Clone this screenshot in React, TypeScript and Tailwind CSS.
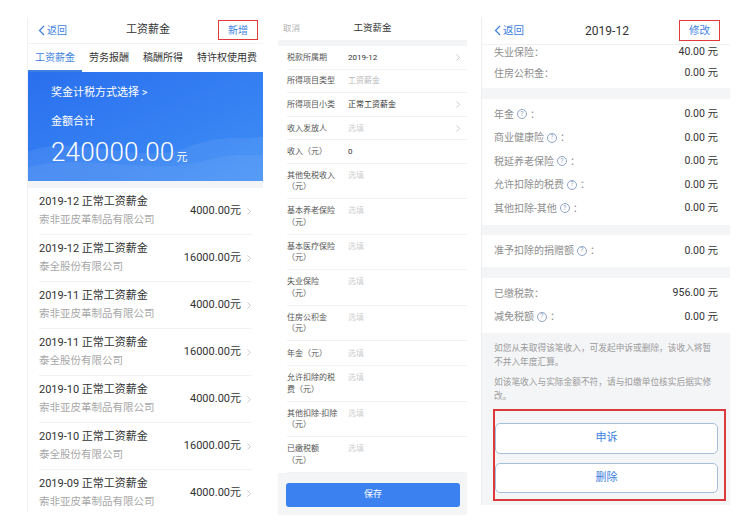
import React from 'react';

const BLUE = 'text-[#3d7fe0]';

function BackLink({ size = 'text-[10px]' }: { size?: string }) {
  return (
    <span className={`flex items-center gap-[2px] ${BLUE} ${size}`}>
      <svg width="7" height="11" viewBox="0 0 7 11" fill="none">
        <polyline points="6,1 1.5,5.5 6,10" stroke="#3d7fe0" strokeWidth="1.2" />
      </svg>
      返回
    </span>
  );
}

function Chevron({ className = '' }: { className?: string }) {
  return (
    <svg width="4" height="7" viewBox="0 0 4 7" fill="none" className={className}>
      <polyline points="0.5,0.5 3.5,3.5 0.5,6.5" stroke="#c4c4c4" strokeWidth="0.9" />
    </svg>
  );
}

function Help() {
  return (
    <span className="inline-flex items-center justify-center w-[10px] h-[10px] rounded-full border border-[#8fa4c6] text-[7px] leading-none text-[#8fa4c6] mx-[3px]">
      ?
    </span>
  );
}

const salaryRows = [
  { title: '2019-12 正常工资薪金', company: '索非亚皮革制品有限公司', amount: '4000.00' },
  { title: '2019-12 正常工资薪金', company: '泰全股份有限公司', amount: '16000.00' },
  { title: '2019-11 正常工资薪金', company: '索非亚皮革制品有限公司', amount: '4000.00' },
  { title: '2019-11 正常工资薪金', company: '泰全股份有限公司', amount: '16000.00' },
  { title: '2019-10 正常工资薪金', company: '索非亚皮革制品有限公司', amount: '4000.00' },
  { title: '2019-10 正常工资薪金', company: '泰全股份有限公司', amount: '16000.00' },
  { title: '2019-09 正常工资薪金', company: '索非亚皮革制品有限公司', amount: '4000.00' },
];

function SalaryList() {
  const tabs = ['工资薪金', '劳务报酬', '稿酬所得', '特许权使用费'];
  return (
    <div className="w-[236px] h-[495px] shrink-0 overflow-hidden flex flex-col bg-white border-l border-[#f0f0f0]">
      <div className="h-[27px] shrink-0 grid grid-cols-[1fr_auto_1fr] items-center pl-[10px] pr-[5px] border-b border-[#f3f3f3]">
        <BackLink />
        <span className="text-[11px] text-[#333]">工资薪金</span>
        <div className="flex justify-end">
          <span className={`w-[40px] h-[20px] flex items-center justify-center border-[1.5px] border-[#e0393b] text-[10px] ${BLUE}`}>
            新增
          </span>
        </div>
      </div>
      <div className="h-[28px] shrink-0 flex items-stretch">
        {tabs.map((t, i) => (
          <div
            key={t}
            className={`shrink-0 whitespace-nowrap px-[7px] flex items-center text-[10px] ${
              i === 0 ? 'text-[#3d7fe0] border-b-2 border-[#3d7fe0]' : 'text-[#333] border-b-2 border-transparent'
            }`}
          >
            {t}
          </div>
        ))}
      </div>
      <div className="h-[109px] shrink-0 relative overflow-hidden bg-gradient-to-br from-[#2a6fee] to-[#3f8ef6] text-white">
        <svg className="absolute inset-0" width="236" height="109" viewBox="0 0 236 109" preserveAspectRatio="none">
          <path d="M0,80 C50,60 110,95 160,75 C200,60 220,70 236,64 L236,109 L0,109 Z" fill="#ffffff" fillOpacity="0.07" />
          <path d="M0,95 C60,80 120,105 180,88 C210,80 225,85 236,82 L236,109 L0,109 Z" fill="#ffffff" fillOpacity="0.06" />
        </svg>
        <div className="relative flex flex-col pl-[23px] pt-[14px]">
          <span className="text-[11px] leading-[14px]">奖金计税方式选择 &gt;</span>
          <span className="text-[11px] leading-[14px] mt-[15px]">金额合计</span>
          <span className="mt-[8px] flex items-baseline">
            <span className="text-[26px] leading-[30px] font-light tracking-[0.2px]">240000.00</span>
            <span className="text-[11px] ml-[2px]">元</span>
          </span>
        </div>
      </div>
      <div className="h-[7px] shrink-0 bg-[#f2f4f7]" />
      {salaryRows.map((r, i) => (
        <div key={i} className="h-[47px] shrink-0 mx-[11px] flex items-center border-b border-[#f2f2f2]">
          <div className="flex-1 flex flex-col gap-[4px]">
            <span className="text-[11px] leading-[14px] text-[#333]">{r.title}</span>
            <span className="text-[10.5px] leading-[14px] text-[#a8a8a8]">{r.company}</span>
          </div>
          <span className="text-[11px] text-[#333]">{r.amount}元</span>
          <Chevron className="ml-[6px] mr-[1px]" />
        </div>
      ))}
    </div>
  );
}

type FormRow = { label: string[]; value: string; kind: 'dark' | 'muted' | 'hint'; arrow?: boolean };

const formRows: FormRow[] = [
  { label: ['税款所属期'], value: '2019-12', kind: 'dark', arrow: true },
  { label: ['所得项目类型'], value: '工资薪金', kind: 'muted' },
  { label: ['所得项目小类'], value: '正常工资薪金', kind: 'dark', arrow: true },
  { label: ['收入发放人'], value: '选填', kind: 'hint', arrow: true },
  { label: ['收入（元）'], value: '0', kind: 'dark' },
  { label: ['其他免税收入', '（元）'], value: '选填', kind: 'hint' },
  { label: ['基本养老保险', '（元）'], value: '选填', kind: 'hint' },
  { label: ['基本医疗保险', '（元）'], value: '选填', kind: 'hint' },
  { label: ['失业保险', '（元）'], value: '选填', kind: 'hint' },
  { label: ['住房公积金', '（元）'], value: '选填', kind: 'hint' },
  { label: ['年金（元）'], value: '选填', kind: 'hint' },
  { label: ['允许扣除的税', '费（元）'], value: '选填', kind: 'hint' },
  { label: ['其他扣除-扣除', '（元）'], value: '选填', kind: 'hint' },
  { label: ['已缴税额', '（元）'], value: '选填', kind: 'hint' },
];

const valueColor = { dark: 'text-[#333]', muted: 'text-[#b8b8b8]', hint: 'text-[#cfcfcf]' };

function SalaryForm() {
  return (
    <div className="w-[189px] h-[498px] shrink-0 overflow-hidden flex flex-col bg-white">
      <div className="h-[23px] shrink-0 grid grid-cols-[1fr_auto_1fr] items-center px-[5px]">
        <span className="text-[8.5px] text-[#b0b0b0]">取消</span>
        <span className="text-[9.5px] text-[#333]">工资薪金</span>
        <span />
      </div>
      <div className="h-[6px] shrink-0 bg-[#f3f4f6]" />
      {formRows.map((r, i) => {
        const double = r.label.length > 1;
        const size = double ? 'h-[35.5px] items-start pt-[6px] leading-[11.5px]' : i === 10 ? 'h-[25px] items-center leading-[11px]' : 'h-[23.6px] items-center leading-[11px]';
        return (
          <div key={i} className={`shrink-0 ml-[9px] flex border-b border-[#f2f2f2] text-[8px] ${size}`}>
            <div className="w-[61px] flex flex-col text-[#555]">
              {r.label.map((l, j) => (
                <span key={j} className="whitespace-nowrap">{l}</span>
              ))}
            </div>
            <span className={`flex-1 ${valueColor[r.kind]}`}>{r.value}</span>
            {r.arrow && <Chevron className="mr-[7px]" />}
          </div>
        );
      })}
      <div className="flex-1 bg-[#f4f5f7] pt-[10px] pl-[8px] pr-[7px]">
        <div className="h-[24px] rounded-[3px] bg-[#3b82f0] flex items-center justify-center text-[9px] text-white">
          保存
        </div>
      </div>
    </div>
  );
}

type DetailRow = { label: string; help?: boolean; value: string };

function DetailLine({ row, h = 'h-[23.5px]' }: { row: DetailRow; h?: string }) {
  return (
    <div className={`${h} flex items-center justify-between px-[12px]`}>
      <span className="flex items-center text-[10px] text-[#8e8e8e]">
        {row.label}
        {row.help && <Help />}
        ：
      </span>
      <span className="text-[10.5px] text-[#333]">{row.value}</span>
    </div>
  );
}

function Gap() {
  return <div className="h-[10.5px] bg-[#f4f5f7]" />;
}

function SalaryDetail() {
  const sec2: DetailRow[] = [
    { label: '年金', help: true, value: '0.00 元' },
    { label: '商业健康险', help: true, value: '0.00 元' },
    { label: '税延养老保险', help: true, value: '0.00 元' },
    { label: '允许扣除的税费', help: true, value: '0.00 元' },
    { label: '其他扣除-其他', help: true, value: '0.00 元' },
  ];
  return (
    <div className="w-[249px] h-[488px] shrink-0 overflow-hidden flex flex-col bg-white border-l border-[#eeeeee]">
      <div className="h-[28px] shrink-0 relative z-10 bg-white grid grid-cols-[1fr_auto_1fr] items-center pl-[12px] pr-[10px] border-b border-[#f0f0f0]">
        <BackLink size="text-[10.5px]" />
        <span className="text-[12px] text-[#333]">2019-12</span>
        <div className="flex justify-end">
          <span className={`w-[41px] h-[21px] flex items-center justify-center border-[1.5px] border-[#e0393b] text-[10.5px] ${BLUE}`}>
            修改
          </span>
        </div>
      </div>
      <div className="flex-1 overflow-hidden">
        <div className="-mt-[3.5px] flex flex-col">
          <div className="pb-[4.5px]">
            <DetailLine h="h-[21px]" row={{ label: '失业保险', value: '40.00 元' }} />
            <DetailLine h="h-[21px]" row={{ label: '住房公积金', value: '0.00 元' }} />
          </div>
          <Gap />
          <div className="pt-[4px] pb-[4.5px]">
            {sec2.map((r) => (
              <DetailLine key={r.label} row={r} />
            ))}
          </div>
          <Gap />
          <div className="pt-[4px] pb-[4.5px]">
            <DetailLine row={{ label: '准予扣除的捐赠额', help: true, value: '0.00 元' }} />
          </div>
          <Gap />
          <div className="pt-[4px] pb-[4.5px]">
            <DetailLine row={{ label: '已缴税款', value: '956.00 元' }} />
            <DetailLine row={{ label: '减免税额', help: true, value: '0.00 元' }} />
          </div>
          <div className="bg-[#f4f5f7] pt-[8px] pb-[10px] px-[12px] text-[8.7px] leading-[14px] text-[#9a9a9a]">
            <p>
              如您从未取得该笔收入，可发起申诉或删除，该收入将暂
              <br />
              不并入年度汇算。
            </p>
            <p className="mt-[6px]">
              如该笔收入与实际金额不符，请与扣缴单位核实后据实修
              <br />
              改。
            </p>
            <div className="-ml-[1px] -mr-[8px] mt-[6px] border-2 border-[#dc3a3d] pt-[12px] pb-[6px] pr-[6px] flex flex-col gap-[9px]">
              {['申诉', '删除'].map((t) => (
                <div
                  key={t}
                  className={`h-[30.5px] bg-white border border-[#a7bedb] rounded-[5px] flex items-center justify-center text-[11px] ${BLUE}`}
                >
                  {t}
                </div>
              ))}
            </div>
          </div>
        </div>
      </div>
    </div>
  );
}

export default function App() {
  return (
    <div className="w-[748px] h-[520px] bg-white flex items-start pl-[27px] pt-[17px] gap-[15px] font-[Roboto,'Noto_Sans_CJK_SC',sans-serif] overflow-hidden">
      <SalaryList />
      <SalaryForm />
      <div className="-ml-[1px]">
        <SalaryDetail />
      </div>
    </div>
  );
}
